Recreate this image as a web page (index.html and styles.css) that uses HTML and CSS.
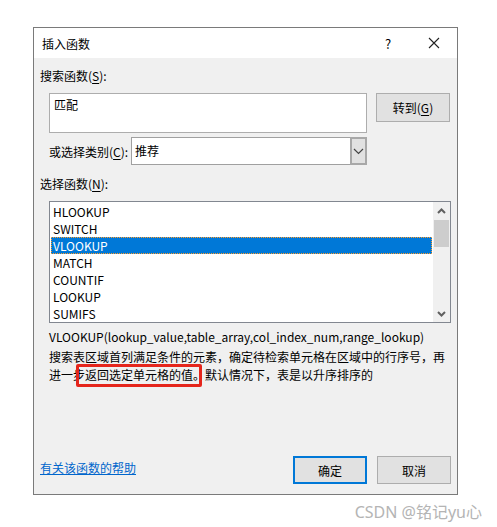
FILE: index.html
```html
<!DOCTYPE html>
<html lang="zh-CN">
<head>
    <meta charset="UTF-8">
    <title>插入函数</title>
    <link rel="stylesheet" href="styles.css">
</head>
<body>

    <div class="page">
        <!-- Insert Function dialog -->
        <div class="dialog">
            <div class="titlebar">
                <span class="title">插入函数</span>
                <span class="help-btn">?</span>
                <span class="close-btn">
                    <svg width="12" height="12" viewBox="0 0 12 12">
                        <path d="M1 1 L11 11 M11 1 L1 11" stroke="#222" stroke-width="1.1" fill="none"/>
                    </svg>
                </span>
            </div>

            <div class="dialog-body">
                <div class="label">搜索函数(<u>S</u>):</div>

                <div class="search-row">
                    <div class="search-box">匹配</div>
                    <button class="btn">转到(<u>G</u>)</button>
                </div>

                <div class="category-row">
                    <span class="category-label">或选择类别(<u>C</u>):</span>
                    <div class="select">
                        <span class="select-value">推荐</span>
                        <span class="select-arrow">
                            <svg width="11" height="7" viewBox="0 0 11 7">
                                <path d="M1 1 L5.5 5.5 L10 1" stroke="#444" stroke-width="1.2" fill="none"/>
                            </svg>
                        </span>
                    </div>
                </div>

                <div class="label label-list">选择函数(<u>N</u>):</div>

                <div class="listbox">
                    <ul class="items">
                        <li>HLOOKUP</li>
                        <li>SWITCH</li>
                        <li class="selected">VLOOKUP</li>
                        <li>MATCH</li>
                        <li>COUNTIF</li>
                        <li>LOOKUP</li>
                        <li>SUMIFS</li>
                    </ul>
                    <div class="scrollbar">
                        <span class="scroll-arrow">
                            <svg width="9" height="6" viewBox="0 0 9 6">
                                <path d="M1 5 L4.5 1.5 L8 5" stroke="#606060" stroke-width="2" fill="none"/>
                            </svg>
                        </span>
                        <span class="scroll-thumb"></span>
                        <span class="scroll-track"></span>
                        <span class="scroll-arrow">
                            <svg width="9" height="6" viewBox="0 0 9 6">
                                <path d="M1 1 L4.5 4.5 L8 1" stroke="#606060" stroke-width="2" fill="none"/>
                            </svg>
                        </span>
                    </div>
                </div>

                <div class="syntax">VLOOKUP(lookup_value,table_array,col_index_num,range_lookup)</div>
                <div class="desc">搜索表区域首列满足条件的元素，确定待检索单元格在区域中的行序号，再进一步返回选定单元格的值。默认情况下，表是以升序排序的</div>

                <!-- red annotation box drawn over the description -->
                <div class="mark"></div>

                <div class="footer">
                    <a class="help-link" href="#">有关该函数的帮助</a>
                    <div class="buttons">
                        <button class="btn btn-default">确定</button>
                        <button class="btn">取消</button>
                    </div>
                </div>
            </div>
        </div>

        <div class="watermark">CSDN @铭记yu心</div>
    </div>

</body>
</html>
```

FILE: styles.css
```css
body {
    margin: 0;
    padding: 0;
    background-color: white;
    font-family: "Noto Sans CJK SC", "Noto Sans", sans-serif;
    font-size: 12px;
    color: #000;
}

.page {
    width: 497px;
    height: 527px;
    padding: 27px 0 0 33px;
    box-sizing: border-box;
}

.dialog {
    width: 425px;
    height: 468px;
    border: 1px solid #7a7a7a;
    box-sizing: border-box;
    display: flex;
    flex-direction: column;
}

.titlebar {
    height: 30px;
    background-color: white;
    display: flex;
    align-items: center;
    padding-left: 8px;
}

.title {
    flex-grow: 1;
    font-size: 12px;
}

.help-btn {
    width: 12px;
    font-size: 13px;
    margin-right: 31px;
}

.close-btn {
    width: 12px;
    height: 12px;
    margin-right: 17px;
    display: flex;
}

.dialog-body {
    flex-grow: 1;
    background-color: #f0f0f0;
    padding: 10px 6px 10px 6px;
    display: flex;
    flex-direction: column;
    position: relative;
}

.label {
    line-height: 16px;
    height: 16px;
}

u {
    text-decoration: underline;
    text-underline-offset: 2px;
}

.search-row {
    display: flex;
    margin-top: 9px;
    padding-left: 9px;
}

.search-box {
    width: 318px;
    height: 40px;
    box-sizing: border-box;
    background-color: white;
    border: 1px solid #adadad;
    padding: 3px 4px;
    line-height: 16px;
}

.btn {
    width: 74px;
    height: 29px;
    margin-left: 9px;
    background-color: #e1e1e1;
    border: 1px solid #adadad;
    font-family: "Noto Sans CJK SC", "Noto Sans", sans-serif;
    font-size: 12px;
    color: #000;
    padding: 0;
}

.category-row {
    display: flex;
    align-items: center;
    margin-top: 4px;
    padding-left: 9px;
}

.category-label {
    width: 82px;
}

.select {
    width: 236px;
    height: 28px;
    box-sizing: border-box;
    border: 1px solid #a0a0a0;
    background-color: white;
    display: flex;
}

.select-value {
    flex-grow: 1;
    line-height: 26px;
    padding-left: 3px;
}

.select-arrow {
    width: 17px;
    box-sizing: border-box;
    background-color: #e1e1e1;
    border: 2px solid #a8a8a8;
    margin: -1px -1px -1px 0;
    display: flex;
    align-items: center;
    justify-content: center;
}

.label-list {
    margin-top: 11px;
}

.listbox {
    margin-top: 9px;
    margin-left: 9px;
    width: 402px;
    height: 122px;
    box-sizing: border-box;
    border: 1px solid #828790;
    background-color: white;
    display: flex;
}

.items {
    list-style: none;
    margin: 0;
    padding: 1px 1px 0 1px;
    flex-grow: 1;
}

.items li {
    height: 17px;
    line-height: 17px;
    padding-left: 2px;
}

.items li.selected {
    background-color: #0078d7;
    color: white;
    outline: 1px dotted #ff9d2b;
    outline-offset: -1px;
}

.scrollbar {
    width: 17px;
    background-color: #f0f0f0;
    display: flex;
    flex-direction: column;
}

.scroll-arrow {
    height: 17px;
    display: flex;
    align-items: center;
    justify-content: center;
}

.scroll-thumb {
    height: 27px;
    margin: 1px 1px 0 1px;
    background-color: #cdcdcd;
}

.scroll-track {
    flex-grow: 1;
}

.syntax {
    margin-top: 5px;
    padding-left: 9px;
    line-height: 17px;
}

.desc {
    margin-top: 3px;
    padding-left: 9px;
    width: 402px;
    line-height: 18px;
}

.mark {
    position: absolute;
    left: 42px;
    top: 306px;
    width: 120px;
    height: 17px;
    border: 3px solid #e5261c;
    border-radius: 2px;
}

.footer {
    margin-top: auto;
    display: flex;
    align-items: center;
    justify-content: space-between;
}

.help-link {
    color: #0066cc;
    text-decoration: underline;
    margin-top: -6px;
}

.buttons {
    display: flex;
}

.btn-default {
    height: 28px;
    border: 2px solid #0078d7;
}

.buttons .btn {
    height: 28px;
    margin-left: 10px;
}

.watermark {
    width: 449px;
    text-align: right;
    margin-top: 4px;
    font-family: "Noto Sans", "Noto Sans CJK SC", sans-serif;
    font-size: 16px;
    color: #b4b4b4;
}
```
